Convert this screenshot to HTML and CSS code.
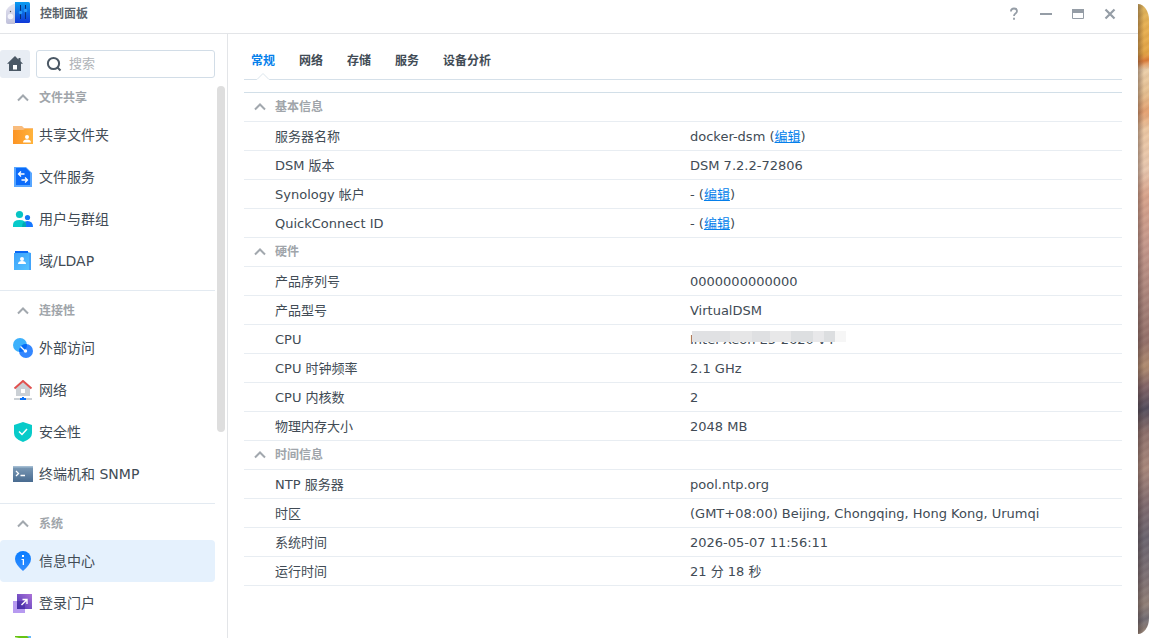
FILE: index.html
```html
<!DOCTYPE html>
<html lang="zh-CN">
<head>
<meta charset="utf-8">
<title>控制面板</title>
<link rel="stylesheet" href="styles.css">
</head>
<body>
<div class="desktop">
  <div class="window">
    <header class="titlebar">
      <svg class="app-icon" viewBox="0 0 24 24" aria-hidden="true">
        <defs>
          <linearGradient id="appBlue" x1="0" y1="0" x2="0" y2="1"><stop offset="0" stop-color="#0a9cf0"/><stop offset="1" stop-color="#1038d8"/></linearGradient>
          <linearGradient id="appGray" x1="0" y1="0" x2="0" y2="1"><stop offset="0" stop-color="#e6e6f2"/><stop offset="1" stop-color="#bfc0da"/></linearGradient>
        </defs>
        <path d="M9 1.500C5 2.500 1 6 0 9v11a2 2 0 0 0 2 2h7z" fill="url(#appGray)"/>
        <path d="M9 0h13.500A1.500 1.500 0 0 1 24 1.500v18a1.500 1.500 0 0 1-1.500 1.500H9z" fill="url(#appBlue)"/>
        <path d="M14.500 3v14M19.500 3v14" stroke="#083078" stroke-width="1"/>
        <circle cx="14.500" cy="10.500" r="1.700" fill="#2b9cf8"/><circle cx="19.500" cy="8.500" r="1.700" fill="#2b9cf8"/>
        <circle cx="4.500" cy="14.500" r="2.800" fill="#f3f3fb"/><circle cx="4.500" cy="9.500" r=".7" fill="#555"/>
      </svg>
      <h1 class="title">控制面板</h1>
      <div class="controls">
        <button type="button" aria-label="帮助"><svg viewBox="0 0 16 16"><path d="M5 5.500V5q0-2.500 3-2.500T11 5q0 1.500-1.500 2.500T8 10M8 11.700v2" stroke-width="1.800"/></svg></button>
        <button type="button" aria-label="最小化"><svg viewBox="0 0 16 16"><path d="M2 8h12" stroke-width="2"/></svg></button>
        <button type="button" aria-label="最大化"><svg viewBox="0 0 16 16"><path d="M2.500 4h11v8.500h-11z"/><path d="M2 5h12" stroke-width="4"/></svg></button>
        <button type="button" aria-label="关闭"><svg viewBox="0 0 16 16"><path d="M3.500 3.500l9 9M12.500 3.500l-9 9" stroke-width="2.200"/></svg></button>
      </div>
    </header>
    <div class="content">
      <aside class="sidebar">
        <div class="tools">
          <button type="button" class="home" aria-label="主页"><svg viewBox="0 0 16 16"><path d="M8 0L0 7.800h2V15h12V7.800h2l-2.500-2.500V2h-2v1.400z" fill="#4b5865"/><path d="M6 9h4v4.500H6z" fill="#fff"/></svg></button>
          <label class="search">
            <svg viewBox="0 0 16 16" aria-hidden="true"><circle cx="7.500" cy="7.500" r="5.600"/><path d="M11.500 11.500l3 3"/></svg>
            <input type="text" placeholder="搜索" aria-label="搜索">
          </label>
        </div>
        <nav class="nav">
          <section class="group">
            <button type="button" class="group-title"><svg class="caret" viewBox="0 0 12 8"><path d="M1 6.500l5-5 5 5"/></svg>文件共享</button>
            <a class="item" href="#"><svg viewBox="0 0 20 20">
              <defs><linearGradient id="folder" x1="0" x2="1"><stop offset="0" stop-color="#fc9424"/><stop offset="1" stop-color="#ffb33c"/></linearGradient></defs>
              <path d="M0 1h9l2 2h9v8H0z" fill="#f9bc7c"/><path d="M0 5h10l2-1h8v15H0z" fill="url(#folder)"/><circle cx="14" cy="12" r="2" fill="#fff"/><path d="M10 17.500q0-3 4-3t4 3z" fill="#fff"/></svg>共享文件夹</a>
            <a class="item" href="#"><svg viewBox="0 0 20 20"><path d="M1 0h12l6 6v14H1z" fill="#58a6ff"/><path d="M3 1h10l4 4v13H3z" fill="#0b6bfa"/><path d="M11.500 7H6M8 4.500L5.500 7 8 9.500M8.500 13H14M12 10.500l2.500 2.500-2.500 2.500" fill="none" stroke="#fff" stroke-width="1.300"/></svg>文件服务</a>
            <a class="item" href="#"><svg viewBox="0 0 20 20"><circle cx="14.500" cy="8.500" r="2.600" fill="#1677f5"/><path d="M9 18q0-6 5.500-6T20 18z" fill="#1677ff"/><circle cx="6.500" cy="5.500" r="3.600" fill="#08c4c4"/><path d="M0 18v-2q0-5 6.500-5t6.500 5v2z" fill="#08caca"/><path d="M9 18q0-4 2-5.300 2 1.300 2 3.300v2z" fill="#02a9b5"/></svg>用户与群组</a>
            <a class="item" href="#"><svg viewBox="0 0 20 20"><defs><linearGradient id="ldap" x1="0" y1="0" x2="1" y2="1"><stop offset="0" stop-color="#3aa0fb"/><stop offset="1" stop-color="#58c5ff"/></linearGradient></defs><path d="M2 0h13v4H2z" fill="#0868f5"/><path d="M1 2h14V1l3 1v17H1z" fill="url(#ldap)"/><path d="M16 2h2v17h-2z" fill="#42a4fa"/><circle cx="9" cy="8" r="2" fill="#fff"/><path d="M5 13q0-3 4-3t4 3z" fill="#fff"/></svg>域/LDAP</a>
          </section>
          <section class="group">
            <button type="button" class="group-title"><svg class="caret" viewBox="0 0 12 8"><path d="M1 6.500l5-5 5 5"/></svg>连接性</button>
            <a class="item" href="#"><svg viewBox="0 0 20 20"><circle cx="7" cy="7" r="7" fill="#3db1fc"/><circle cx="13" cy="13" r="7" fill="#3487ff"/><path d="M6.200 11.500A7 7 0 0 1 14 6.200 7 7 0 0 1 6.200 14z" fill="#066cf6"/><path d="M7.500 8.500l4 4" stroke="#fff" stroke-width="1.300"/><circle cx="12.500" cy="13" r="1.700" fill="#fff"/></svg>外部访问</a>
            <a class="item" href="#"><svg viewBox="0 0 20 20"><path d="M3 8l7-6 7 6v8H3z" fill="#cbd0d5"/><path d="M8 9h4v4H8z" fill="#fff"/><path d="M1.500 8.500L10 1l8.500 7.500" fill="none" stroke="#e0514f" stroke-width="2"/><path d="M1 19h18" stroke="#cbd0d5" stroke-width="2"/><path d="M9 17h2v1h2v2H7v-2h2z" fill="#0870f7"/></svg>网络</a>
            <a class="item" href="#"><svg viewBox="0 0 20 20"><path d="M10 0l9 3v8q0 6-9 9-9-3-9-9V3z" fill="#08cbc9"/><path d="M6 9.500l3 3 5-5.500" fill="none" stroke="#fff" stroke-width="1.500"/></svg>安全性</a>
            <a class="item" href="#"><svg viewBox="0 0 20 20"><defs><linearGradient id="term" x1="0" y1="0" x2="0" y2="1"><stop offset="0" stop-color="#7e9cb8"/><stop offset="1" stop-color="#486b90"/></linearGradient></defs><path d="M0 2h20v16H0z" fill="url(#term)"/><path d="M0 2h20v1.500H0z" fill="#a3bcd2"/><path d="M3 7l2.500 2.500L3 12M7.500 11.500h4.500" fill="none" stroke="#fff" stroke-width="1.300"/></svg>终端机和 SNMP</a>
          </section>
          <section class="group">
            <button type="button" class="group-title"><svg class="caret" viewBox="0 0 12 8"><path d="M1 6.500l5-5 5 5"/></svg>系统</button>
            <a class="item active" href="#" aria-current="page"><svg viewBox="0 0 20 20"><defs><linearGradient id="pin" x1="0" y1="0" x2="0" y2="1"><stop offset="0" stop-color="#087cff"/><stop offset="1" stop-color="#348eff"/></linearGradient></defs><path d="M10 0a8 8 0 0 1 8 8q0 5-8 12Q2 13 2 8a8 8 0 0 1 8-8z" fill="url(#pin)"/><path d="M9 4h2v2H9zM8.500 8H11v6H9.700V9H8.500z" fill="#fff"/></svg>信息中心</a>
            <a class="item" href="#"><svg viewBox="0 0 20 20"><defs><linearGradient id="portal" x1="0" y1="1" x2="1" y2="0"><stop offset="0" stop-color="#4934b4"/><stop offset="1" stop-color="#ad72d8"/></linearGradient></defs><path d="M0 8h12v12H0z" fill="#b79af0"/><path d="M4 1h15v15H4z" fill="url(#portal)"/><path d="M4 8h8v8H4z" fill="#40269c" opacity=".5"/><path d="M8.500 12l5-5M9.500 6.500H14V11" fill="none" stroke="#fff" stroke-width="1.400"/></svg>登录门户</a>
            <a class="item" href="#" aria-label="区域选项"><svg viewBox="0 0 20 20"><path d="M2 1h16v17H2z" fill="#66c413"/><path d="M14 1h4v4z" fill="#67b8fa"/><path d="M2 2l4 1-4 3z" fill="#d7f3b0"/></svg></a>
          </section>
        </nav>
        <div class="scrollbar"></div>
      </aside>
      <main class="panel">
        <div class="tabs" role="tablist">
          <button type="button" role="tab" class="tab selected" aria-selected="true">常规<svg class="notch" viewBox="0 0 14 8"><path d="M1 7l6-6 6 6v1H1z" fill="#fff"/><path d="M0 7.500h1l6-6 6 6h1" fill="none" stroke="#dbe5ec"/></svg></button>
          <button type="button" role="tab" class="tab">网络</button>
          <button type="button" role="tab" class="tab">存储</button>
          <button type="button" role="tab" class="tab">服务</button>
          <button type="button" role="tab" class="tab">设备分析</button>
        </div>
        <table class="info">
          <tbody>
            <tr><th colspan="2" class="head"><button type="button"><svg class="caret" viewBox="0 0 12 8"><path d="M1 6.500l5-5 5 5"/></svg>基本信息</button></th></tr>
            <tr><th scope="row">服务器名称</th><td>docker-dsm (<a href="#">编辑</a>)</td></tr>
            <tr><th scope="row">DSM 版本</th><td>DSM 7.2.2-72806</td></tr>
            <tr><th scope="row">Synology 帐户</th><td>- (<a href="#">编辑</a>)</td></tr>
            <tr><th scope="row">QuickConnect ID</th><td>- (<a href="#">编辑</a>)</td></tr>
          </tbody>
          <tbody>
            <tr><th colspan="2" class="head"><button type="button"><svg class="caret" viewBox="0 0 12 8"><path d="M1 6.500l5-5 5 5"/></svg>硬件</button></th></tr>
            <tr><th scope="row">产品序列号</th><td>0000000000000</td></tr>
            <tr><th scope="row">产品型号</th><td>VirtualDSM</td></tr>
            <tr><th scope="row">CPU</th><td><span class="masked">Intel Xeon E5-2620 v4</span></td></tr>
            <tr><th scope="row">CPU 时钟频率</th><td>2.1 GHz</td></tr>
            <tr><th scope="row">CPU 内核数</th><td>2</td></tr>
            <tr><th scope="row">物理内存大小</th><td>2048 MB</td></tr>
          </tbody>
          <tbody>
            <tr><th colspan="2" class="head"><button type="button"><svg class="caret" viewBox="0 0 12 8"><path d="M1 6.500l5-5 5 5"/></svg>时间信息</button></th></tr>
            <tr><th scope="row">NTP 服务器</th><td>pool.ntp.org</td></tr>
            <tr><th scope="row">时区</th><td>(GMT+08:00) Beijing, Chongqing, Hong Kong, Urumqi</td></tr>
            <tr><th scope="row">系统时间</th><td>2026-05-07 11:56:11</td></tr>
            <tr><th scope="row">运行时间</th><td>21 分 18 秒</td></tr>
          </tbody>
        </table>
      </main>
    </div>
  </div>
  <div class="wallpaper"></div>
</div>
</body>
</html>
```

FILE: styles.css
```css
* { box-sizing: border-box; }

body {
  margin: 0;
  background: #fff;
  color: #414b55;
  font: 13px/20px "DejaVu Sans", "Noto Sans CJK SC", sans-serif;
}

button, input { font: inherit; color: inherit; border: 0; padding: 0; margin: 0; background: none; }
a { color: #057feb; }

.desktop { display: flex; height: 100vh; overflow: hidden; }
.window { flex: 1; min-width: 0; display: flex; flex-direction: column; }

.wallpaper {
  width: 11px;
  margin: 4px 0;
  border-radius: 0 11px 11px 0 / 0 16px 16px 0;
  background:
    linear-gradient(90deg, rgba(40, 25, 25, 0.35), transparent 6px),
    repeating-linear-gradient(150deg, rgba(255, 235, 210, 0.06), rgba(90, 50, 50, 0.06) 4px, rgba(255, 235, 210, 0.06) 7px),
    linear-gradient(172deg, #dcb45c 0, #e8b050 24px, #e4a544 50px, #dc7c38 57px, #ecd0ac 66px, #e6c090 90px, #e4a070 108px, #ecc8a4 125px, #e8c8b0 165px, #d8a48c 190px, #c4988c 240px, #a48078 300px, #92706a 335px, #b08c70 360px, #806468 380px, #504c5c 402px, #8c706c 425px, #a8887c 460px, #806c70 495px, #686470 530px, #7c7074 570px, #908078 595px, #706c74 610px, #9c8878 100%);
}

.titlebar {
  display: flex;
  align-items: center;
  height: 34px;
  padding: 0 20px 6px 6px;
  border-bottom: 1px solid #e3e5e8;
}
.app-icon { width: 24px; height: 24px; margin-right: 10px; }
.title { margin: 0; font-size: 12px; font-weight: 700; color: #5a636c; }
.controls { display: flex; gap: 16px; margin-left: auto; }
.controls button, .controls svg { display: block; width: 16px; height: 16px; }
.controls svg { fill: none; stroke: #959da6; }

.content { flex: 1; min-height: 0; display: flex; }

.sidebar {
  position: relative;
  width: 228px;
  padding: 16px 12px 0 0;
  border-right: 1px solid #e3e5e8;
  overflow: hidden;
}
.tools { display: flex; gap: 6px; margin-bottom: 4px; }
.home {
  display: flex;
  align-items: center;
  justify-content: center;
  width: 30px;
  height: 28px;
  border-radius: 3px;
  background: #e8edf4;
}
.home svg { width: 16px; height: 16px; }
.search {
  flex: 1;
  min-width: 0;
  display: flex;
  align-items: center;
  gap: 7px;
  height: 28px;
  padding-left: 9px;
  border: 1px solid #d2dde7;
  border-radius: 3px;
}
.search svg { flex: none; width: 16px; height: 16px; fill: none; stroke: #4b5865; stroke-width: 2; }
.search input { flex: 1; min-width: 0; outline: 0; }
.search input::placeholder { color: #b0b4b8; opacity: 1; }

.group { padding-bottom: 8px; }
.group + .group { padding-top: 4px; border-top: 1px solid #e3eaf1; }
.group-title {
  display: flex;
  align-items: center;
  width: 100%;
  height: 32px;
  padding-left: 17px;
  color: #a0a5aa;
  font-size: 12px;
  font-weight: 700;
}
.caret { width: 12px; height: 8px; margin-right: 10px; fill: none; stroke: #a2a8ae; stroke-width: 2; }
.item {
  display: flex;
  align-items: center;
  gap: 6px;
  height: 42px;
  padding-left: 13px;
  border-radius: 4px;
  color: #414b55;
  font-size: 14px;
  text-decoration: none;
}
.item svg { width: 20px; height: 20px; }
.item.active { background: #e5f1fd; }

.scrollbar {
  position: absolute;
  top: 52px;
  right: 2px;
  width: 8px;
  height: 346px;
  border-radius: 4px;
  background: #dedede;
}

.panel { flex: 1; min-width: 0; padding: 16px 16px 0; }
.tabs {
  display: flex;
  gap: 24px;
  height: 30px;
  margin-bottom: 12px;
  padding-left: 7px;
  border-bottom: 1px solid #d5e0e9;
}
.tab { position: relative; height: 22px; font-size: 12px; font-weight: 700; }
.tab.selected { color: #057feb; }
.notch { position: absolute; left: 5px; top: 22px; width: 14px; height: 8px; }

.info { width: 100%; table-layout: fixed; border-collapse: separate; border-spacing: 0; border-top: 1px solid #d2dfe8; }
.info th, .info td { height: 29px; padding: 2px 0 0; border-bottom: 1px solid #e8edf2; font-weight: 400; text-align: left; white-space: nowrap; }
.info th { padding-left: 31px; }
.info td { padding-left: 7px; }
.info th.head { padding: 0 0 0 10px; }
.head button { display: flex; align-items: center; color: #a0a5aa; font-size: 12px; font-weight: 700; }
.head .caret { margin-right: 9px; }

.masked { position: relative; }
.masked::after {
  content: "";
  position: absolute;
  left: 2px;
  top: -1px;
  width: 154px;
  height: 11px;
  background: linear-gradient(90deg, #e0e1e3 0 38px, #e6e6e7 38px 60px, #dfe0e2 60px 78px, #e8e8e9 78px 99px, #dddfe1 99px 121px, #e8e8ea 121px 132px, #dcdee0 132px 143px, #f6f6f6 143px);
}
```
